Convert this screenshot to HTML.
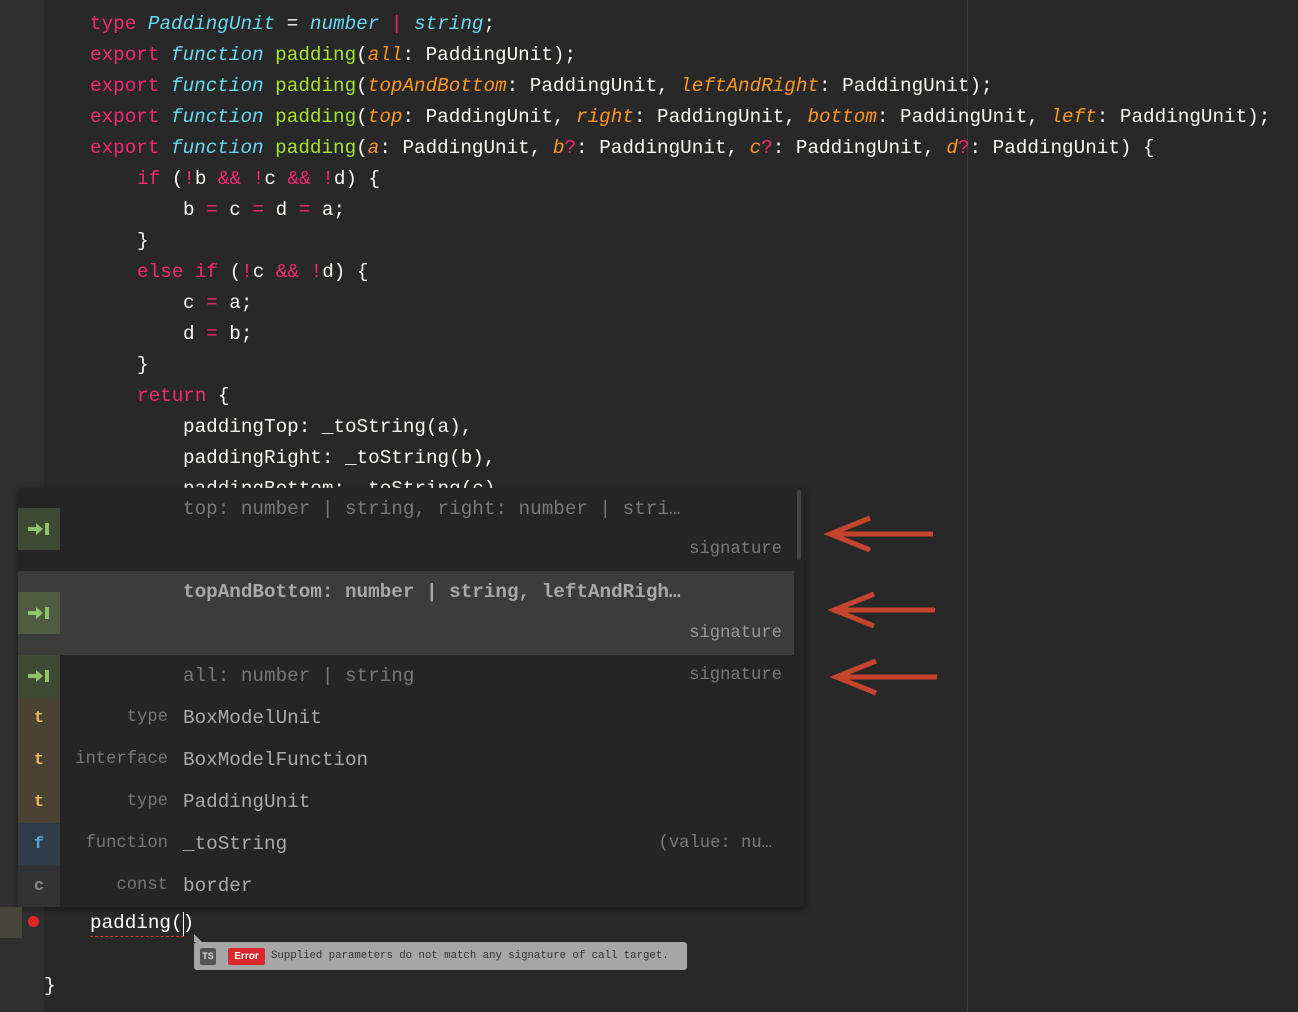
<!DOCTYPE html>
<html><head><meta charset="utf-8"><style>
*{margin:0;padding:0;box-sizing:border-box}
body{width:1298px;height:1012px;overflow:hidden;background:#282828;font-family:"Liberation Mono",monospace;position:relative}
.gut{position:absolute;left:0;top:0;width:44px;height:1012px;background:#2f2f2f}
.ruler{position:absolute;left:967px;top:0;width:1px;height:1012px;background:#3a3a3a}
.l{position:absolute;white-space:pre;font-size:19.3px;line-height:31px;color:#f8f8f2;height:31px}
.k{color:#f92672}.t{color:#66d9ef;font-style:italic}.f{color:#a6e22e}.p{color:#fd971f;font-style:italic}
.pop{position:absolute;left:18px;top:488px;width:786px;height:419px;background:#252525;box-shadow:0 2px 6px rgba(0,0,0,.4);overflow:hidden}
.row{position:absolute;left:0;width:776px}
.ic{position:absolute;left:0;width:42px;font-size:17px;font-weight:bold;display:flex;align-items:center;justify-content:center}
.txt{position:absolute;white-space:pre;font-size:19.3px;line-height:42px}
.kind{position:absolute;white-space:pre;font-size:17.2px;line-height:42px;color:#777;text-align:right;width:150px;left:0}
.sig{position:absolute;right:12px;font-size:17.2px;line-height:42px;color:#7a7a7a}
</style></head><body>
<div class="gut"></div>
<div class="ruler"></div>
<div class="l" style="left:90px;top:9px"><span class="k">type</span> <span class="t">PaddingUnit</span> = <span class="t">number</span> <span class="k">|</span> <span class="t">string</span>;</div>
<div class="l" style="left:90px;top:40px"><span class="k">export</span> <span class="t">function</span> <span class="f">padding</span>(<span class="p">all</span>: PaddingUnit);</div>
<div class="l" style="left:90px;top:71px"><span class="k">export</span> <span class="t">function</span> <span class="f">padding</span>(<span class="p">topAndBottom</span>: PaddingUnit, <span class="p">leftAndRight</span>: PaddingUnit);</div>
<div class="l" style="left:90px;top:102px"><span class="k">export</span> <span class="t">function</span> <span class="f">padding</span>(<span class="p">top</span>: PaddingUnit, <span class="p">right</span>: PaddingUnit, <span class="p">bottom</span>: PaddingUnit, <span class="p">left</span>: PaddingUnit);</div>
<div class="l" style="left:90px;top:133px"><span class="k">export</span> <span class="t">function</span> <span class="f">padding</span>(<span class="p">a</span>: PaddingUnit, <span class="p">b</span><span class="k">?</span>: PaddingUnit, <span class="p">c</span><span class="k">?</span>: PaddingUnit, <span class="p">d</span><span class="k">?</span>: PaddingUnit) {</div>
<div class="l" style="left:137px;top:164px"><span class="k">if</span> (<span class="k">!</span>b <span class="k">&amp;&amp;</span> <span class="k">!</span>c <span class="k">&amp;&amp;</span> <span class="k">!</span>d) {</div>
<div class="l" style="left:183px;top:195px">b <span class="k">=</span> c <span class="k">=</span> d <span class="k">=</span> a;</div>
<div class="l" style="left:137px;top:226px">}</div>
<div class="l" style="left:137px;top:257px"><span class="k">else if</span> (<span class="k">!</span>c <span class="k">&amp;&amp;</span> <span class="k">!</span>d) {</div>
<div class="l" style="left:183px;top:288px">c <span class="k">=</span> a;</div>
<div class="l" style="left:183px;top:319px">d <span class="k">=</span> b;</div>
<div class="l" style="left:137px;top:350px">}</div>
<div class="l" style="left:137px;top:381px"><span class="k">return</span> {</div>
<div class="l" style="left:183px;top:412px">paddingTop: _toString(a),</div>
<div class="l" style="left:183px;top:443px">paddingRight: _toString(b),</div>
<div class="l" style="left:183px;top:474px">paddingBottom: _toString(c),</div>

<div class="pop">
 <div class="row" style="top:0;height:83px">
  <div class="ic" style="top:20px;height:42px;background:#3e4a33"><svg width="24" height="14"><path d="M1 5h8V1l7 6-7 6V9H1z M18 1h4v12h-4z" fill="#8fc46a"/></svg></div>
  <div class="txt" style="left:165px;top:0;color:#787878">top: number | string, right: number | stri…</div>
  <div class="sig" style="top:41px">signature</div>
 </div>
 <div class="row" style="top:83px;height:84px;background:#3c3c3c">
  <div class="ic" style="top:21px;height:42px;background:#4f5c42"><svg width="24" height="14"><path d="M1 5h8V1l7 6-7 6V9H1z M18 1h4v12h-4z" fill="#8fc46a"/></svg></div>
  <div class="txt" style="left:165px;top:0;color:#a8a8a8;font-weight:bold">topAndBottom: number | string, leftAndRigh…</div>
  <div class="sig" style="top:42px;color:#9a9a9a">signature</div>
 </div>
 <div class="row" style="top:167px;height:42px">
  <div class="ic" style="top:0;height:42px;background:#3e4a33"><svg width="24" height="14"><path d="M1 5h8V1l7 6-7 6V9H1z M18 1h4v12h-4z" fill="#8fc46a"/></svg></div>
  <div class="txt" style="left:165px;top:0;color:#787878">all: number | string</div>
  <div class="sig" style="top:0">signature</div>
 </div>
 <div class="row" style="top:209px;height:42px"><div class="ic" style="height:42px;background:#4a4232;color:#e6b85c">t</div><div class="kind">type</div><div class="txt" style="left:165px;color:#ababab">BoxModelUnit</div></div>
 <div class="row" style="top:251px;height:42px"><div class="ic" style="height:42px;background:#4a4232;color:#e6b85c">t</div><div class="kind">interface</div><div class="txt" style="left:165px;color:#ababab">BoxModelFunction</div></div>
 <div class="row" style="top:293px;height:42px"><div class="ic" style="height:42px;background:#4a4232;color:#e6b85c">t</div><div class="kind">type</div><div class="txt" style="left:165px;color:#ababab">PaddingUnit</div></div>
 <div class="row" style="top:335px;height:42px"><div class="ic" style="height:42px;background:#2f3d4a;color:#5aa0d8">f</div><div class="kind">function</div><div class="txt" style="left:165px;color:#ababab">_toString</div><div class="sig" style="right:22px">(value: nu…</div></div>
 <div class="row" style="top:377px;height:42px"><div class="ic" style="height:42px;background:#333;color:#888">c</div><div class="kind">const</div><div class="txt" style="left:165px;color:#ababab">border</div></div>
 <div style="position:absolute;left:779px;top:2px;width:4px;height:70px;background:#444;border-radius:2px"></div>
</div>

<svg style="position:absolute;left:820px;top:510px" width="125" height="190">
 <g stroke="#c4442e" stroke-width="5" fill="none">
  <path d="M113 24H10M50 8L10 24L50 40"/>
  <path d="M115 100H14M54 84L14 100L54 116"/>
  <path d="M117 167H16M56 151L16 167L56 183"/>
 </g>
</svg>

<div style="position:absolute;left:0;top:907px;width:22px;height:31px;background:#45453a"></div>
<div style="position:absolute;left:28px;top:916px;width:11px;height:11px;border-radius:50%;background:#e0242a"></div>
<div class="l" style="left:90px;top:908px;color:#fff">padding()</div>
<div style="position:absolute;left:183px;top:912px;width:1px;height:24px;background:#fff"></div>
<div style="position:absolute;left:90px;top:936px;width:94px;border-top:1px dashed #d33"></div>
<div style="position:absolute;left:194px;top:942px;width:493px;height:28px;background:#a6a6a6;border-radius:3px"></div>
<div style="position:absolute;left:194px;top:934px;width:0;height:0;border-left:8px solid #a6a6a6;border-top:8px solid transparent"></div>
<div style="position:absolute;left:200px;top:948px;width:16px;height:17px;background:#555;border-radius:2px;color:#ddd;font:bold 9px 'Liberation Sans',sans-serif;line-height:17px;text-align:center">TS</div>
<div style="position:absolute;left:228px;top:948px;width:37px;height:17px;background:#d9272b;border-radius:2px;color:#fff;font:bold 10px 'Liberation Sans',sans-serif;line-height:17px;text-align:center">Error</div>
<div style="position:absolute;left:271px;top:948px;font-size:10.7px;line-height:17px;color:#333;white-space:pre">Supplied parameters do not match any signature of call target.</div>
<div class="l" style="left:44px;top:971px">}</div>
</body></html>
